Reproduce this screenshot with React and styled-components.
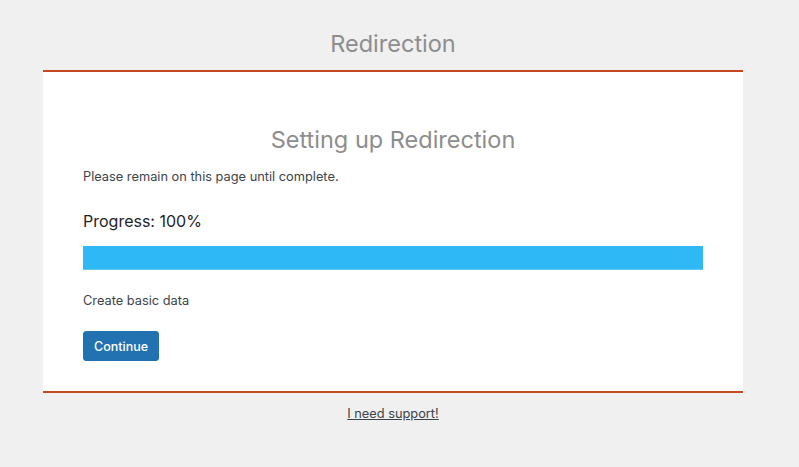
import React from "react";
import styled, { createGlobalStyle } from "styled-components";

const GlobalStyle = createGlobalStyle`
  html, body {
    margin: 0;
    padding: 0;
    background: #f0f0f0;
    font-family: Inter, "Liberation Sans", Arial, sans-serif;
    -webkit-font-smoothing: antialiased;
  }
`;

function App() {
  const progress = 100;

  return (
    <Page>
      <GlobalStyle />
      <Wrap>
        <PageTitle>Redirection</PageTitle>
        <Panel>
          <SetupTitle>Setting up Redirection</SetupTitle>
          <Note>Please remain on this page until complete.</Note>
          <ProgressLabel>Progress: {progress}%</ProgressLabel>
          <Track>
            <Fill style={{ width: `${progress}%` }} />
          </Track>
          <Step>Create basic data</Step>
          <Button type="button">Continue</Button>
        </Panel>
        <Footer>
          <SupportLink href="#support">I need support!</SupportLink>
        </Footer>
      </Wrap>
    </Page>
  );
}

export default App;

const Page = styled.div`
  min-height: 467px;
  padding-left: 43px;
`;

const Wrap = styled.div`
  width: 700px;
  display: flex;
  flex-direction: column;
`;

const PageTitle = styled.h1`
  margin: 0;
  padding-top: 29px;
  height: 70px;
  box-sizing: border-box;
  text-align: center;
  font-size: 23.5px;
  font-weight: 400;
  line-height: 30px;
  color: #8d8d8d;
`;

const Panel = styled.div`
  background: #fff;
  border-top: 2px solid #c9471f;
  border-bottom: 2px solid #c9471f;
  padding: 53px 40px 30px;
`;

const SetupTitle = styled.h2`
  margin: 0;
  text-align: center;
  font-size: 23.5px;
  font-weight: 400;
  line-height: 30px;
  color: #8d8d8d;
`;

const Note = styled.p`
  margin: 12px 0 0;
  font-size: 12.8px;
  line-height: 20px;
  color: #3c434a;
`;

const ProgressLabel = styled.p`
  margin: 23px 0 0;
  font-size: 16px;
  line-height: 22px;
  color: #1d2327;
`;

const Track = styled.div`
  margin-top: 14px;
  height: 24px;
  background: #e6e6e6;
`;

const Fill = styled.div`
  height: 100%;
  background: #2eb8f5;
  border-bottom: 1px solid #5cc7f5;
  box-sizing: border-box;
`;

const Step = styled.p`
  margin: 21px 0 0;
  font-size: 12.8px;
  line-height: 20px;
  color: #3c434a;
`;

const Button = styled.button`
  margin-top: 20px;
  height: 30px;
  padding: 0 10px;
  border: 1px solid #2271b1;
  border-radius: 3px;
  background: #2271b1;
  color: #fff;
  font-family: inherit;
  font-size: 12.5px;
  font-weight: 500;
  cursor: pointer;
  align-self: flex-start;
`;

const Footer = styled.div`
  text-align: center;
  padding-top: 9px;
`;

const SupportLink = styled.a`
  font-size: 12.8px;
  line-height: 20px;
  color: #3c434a;
  text-decoration: underline;
`;
